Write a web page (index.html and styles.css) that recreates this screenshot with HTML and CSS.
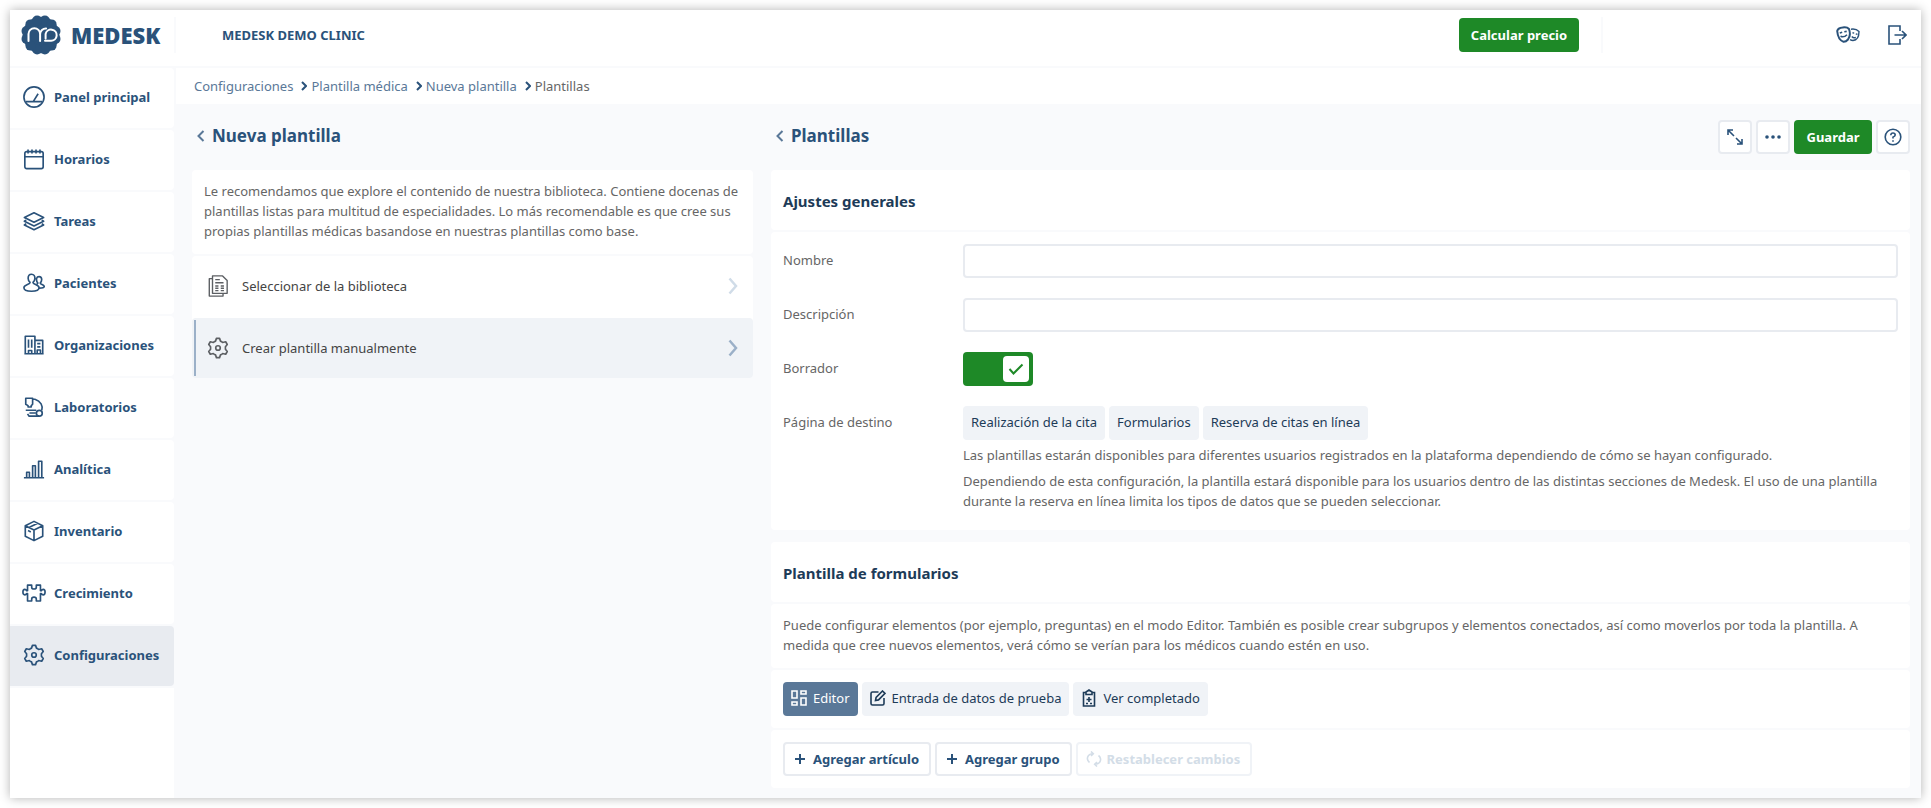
FILE: index.html
```html
<!DOCTYPE html>
<html lang="es">
<head>
<meta charset="utf-8">
<title>Medesk</title>
<link rel="stylesheet" href="styles.css">
</head>
<body>
<svg class="sprite" aria-hidden="true">
  <symbol id="gear" viewBox="0 0 24 24">
    <path d="M10.300 1.500h3.400l1 3q1.500.5 2.400 1.500l3.300-.8 1.700 3-2 2.400v2.800l2 2.400-1.700 3-3.300-.8q-.9 1-2.400 1.500l-1 3h-3.400l-1-3Q7.800 19 6.900 18l-3.300.8-1.700-3 2-2.400v-2.800l-2-2.400 1.700-3 3.300.8q.9-1 2.400-1.500z"/>
    <circle cx="12" cy="12" r="2.500"/>
  </symbol>
  <symbol id="plus" viewBox="0 0 10 10"><path d="M5 0v10M0 5h10"/></symbol>
  <symbol id="back" viewBox="0 0 8 12"><path d="M6.500 1 1.500 6l5 5"/></symbol>
  <symbol id="next" viewBox="0 0 10 18"><path d="M1.500 1.500 8 9l-6.500 7.500"/></symbol>
</svg>
<div class="app">
  <header class="header">
    <a class="logo" href="#">
      <svg class="logo-mark" viewBox="0 0 40 40" aria-hidden="true">
        <g fill="#2a527a">
          <circle cx="20" cy="20" r="18.300"/>
          <circle cx="23.900" cy="5.500" r="5"/><circle cx="30.600" cy="9.400" r="5"/><circle cx="34.500" cy="16.100" r="5"/>
          <circle cx="34.500" cy="23.900" r="5"/><circle cx="30.600" cy="30.600" r="5"/><circle cx="23.900" cy="34.500" r="5"/>
          <circle cx="16.100" cy="34.500" r="5"/><circle cx="9.400" cy="30.600" r="5"/><circle cx="5.500" cy="23.900" r="5"/>
          <circle cx="5.500" cy="16.100" r="5"/><circle cx="9.400" cy="9.400" r="5"/><circle cx="16.100" cy="5.500" r="5"/>
        </g>
        <path d="M7.500 26v-7a5.800 5.800 0 0 1 11.600 0v7M19.100 19a5.800 5.800 0 0 1 6-5.500M24.600 23.500v-4.500a5.600 5.600 0 1 1 5.400 6.800h-6" fill="none" stroke="#fff" stroke-width="2" stroke-linecap="round"/>
      </svg>
      <span class="logo-text">MEDESK</span>
    </a>
    <strong class="clinic">MEDESK DEMO CLINIC</strong>
    <button class="btn btn-green price" type="button">Calcular precio</button>
    <div class="header-tools">
      <button class="tool" type="button" aria-label="Cambiar de usuario">
        <svg width="24" height="18" viewBox="0 0 24 18" class="line">
          <path d="M1.200 5Q2 2 6.500 1.500q4.500-.8 6.500 1.500 2.200 6.500-1 10.500-2 2.300-4.500 2.200Q2 14 1.200 5z" stroke-width="2"/>
          <path d="M3.800 7l2.400-.7M8.300 5.800l2.400-.4M4.500 10.300q3.500 1.500 6.500-1.600" stroke-width="1.600"/>
          <path d="M15 3.200q5-.8 8 2.300 0 8.500-6 9-1.500 0-3-.8M16.500 6.800l1.700.3M19.800 7.800l1.700.6M15.800 10.500q1.700 2 4 .8" stroke-width="1.400"/>
        </svg>
      </button>
      <button class="tool" type="button" aria-label="Salir">
        <svg width="19" height="20" viewBox="0 0 19 20" class="line"><path d="M12 6V1H1v18h11v-5M6.500 10H18M14 6l4 4-4 4"/></svg>
      </button>
    </div>
  </header>

  <div class="body">
    <nav class="sidebar">
      <a class="nav-item" href="#"><svg class="icon" viewBox="0 0 24 24"><circle cx="12" cy="12" r="11"/><path d="M3 17h18M11.500 16.500 16.500 8.500"/></svg>Panel principal</a>
      <a class="nav-item" href="#"><svg class="icon" viewBox="0 0 24 24"><rect x="2" y="4" width="20" height="18.500" rx="2"/><path d="M2 9.500h20M5.500 1.500V6M9.800 1.500V6M14.200 1.500V6M18.500 1.500V6"/></svg>Horarios</a>
      <a class="nav-item" href="#"><svg class="icon" viewBox="0 0 24 24"><path d="m12 3 10.500 5.200L12 13.400 1.500 8.200zM3.500 11 1.500 12.300 12 17.500l10.500-5.200-2-1.300M3.500 15l-2 1.300L12 21.500l10.500-5.200-2-1.300"/></svg>Tareas</a>
      <a class="nav-item" href="#"><svg class="icon" viewBox="0 0 24 24"><path d="M9.300 2.500c-2.600 0-3.700 2-3.700 4.300 0 2 .9 3.500 2.100 4.600C7.700 13.800 1 13.700 1 17.200c0 5 16.500 5 16.500 0 0-3.500-6.600-3.400-6.600-5.800C12.100 10.300 13 8.800 13 6.800c0-2.300-1.100-4.300-3.700-4.300zM14.800 7c.5-1.500 1.500-2 2.700-2 2 0 2.900 1.500 2.900 3.300 0 1.500-.6 2.700-1.600 3.700 0 1.600 4.400 1.600 4.400 3.800 0 1.400-2.200 1.800-5.200 1.800M14.800 7c-.3 2.200.3 3.800 1.400 5l-1 1.300"/></svg>Pacientes</a>
      <a class="nav-item" href="#"><svg class="icon" viewBox="0 0 24 24"><path d="M2.500 21.500v-19h10.500v19M13 7h8.500v14.500M1.500 21.500h21M6 6v9M9.500 6v9M15.500 10.500h3.500M15.500 14h3.500M6 21v-3h3.500v3M15.500 21v-3.500H19V21"/></svg>Organizaciones</a>
      <a class="nav-item" href="#"><svg class="icon" viewBox="0 0 24 24"><path d="M3 2.500h7.500V9L9 10.500v1.500H5.500v-1.500L3 9zM10.500 3.500h2.500C19.500 5.500 22 11 20.500 15.500M3 15.500h11.500M5 19.500l1.500 2.500h11M7 18.500h7"/><circle cx="17.800" cy="18.800" r="3.200"/></svg>Laboratorios</a>
      <a class="nav-item" href="#"><svg class="icon" viewBox="0 0 24 24"><path d="M1 21.500h22M4 21v-5.500h3V21M10.500 21V8.500h3V21M17 21V3.500h3.500V21"/></svg>Analítica</a>
      <a class="nav-item" href="#"><svg class="icon" viewBox="0 0 24 24"><path d="m12 1.500 9.500 4.700v11.600L12 22.500l-9.500-4.700V6.200zM2.500 6.200 12 11l9.500-4.800M12 11v11.500M6.500 8.200 16 3.500M5.500 11.500l3 1.500"/></svg>Inventario</a>
      <a class="nav-item" href="#"><svg class="icon icon-wide" viewBox="0 0 26 24"><path d="M6 3.500h4.500v2.200q0 2 2.500 2t2.500-2V3.500H20v6h1q.5-1.500 2-1.500 2 0 2 3t-2 3q-1.500 0-2-1.500h-1v8.200h-4.500v-2.200q0-2-2.500-2t-2.500 2v2.200H6v-8.200H5Q4.500 14 3 14q-2 0-2-3t2-3q1.500 0 2 1.500h1z"/></svg>Crecimiento</a>
      <a class="nav-item active" href="#" aria-current="page"><svg class="icon"><use href="#gear"/></svg>Configuraciones</a>
      <div class="nav-rest"></div>
    </nav>

    <main class="main">
      <nav class="crumbs" aria-label="Ruta">
        <a href="#">Configuraciones</a><svg class="sep" viewBox="0 0 6 10"><path d="m1 1 4 4-4 4"/></svg>
        <a href="#">Plantilla médica</a><svg class="sep" viewBox="0 0 6 10"><path d="m1 1 4 4-4 4"/></svg>
        <a href="#">Nueva plantilla</a><svg class="sep" viewBox="0 0 6 10"><path d="m1 1 4 4-4 4"/></svg>
        <span>Plantillas</span>
      </nav>
      <div class="columns">
        <section class="left">
          <div class="title-row"><h1 class="title"><svg class="back"><use href="#back"/></svg>Nueva plantilla</h1></div>
          <p class="panel intro">Le recomendamos que explore el contenido de nuestra biblioteca. Contiene docenas de plantillas listas para multitud de especialidades. Lo más recomendable es que cree sus propias plantillas médicas basandose en nuestras plantillas como base.</p>
          <div class="panel">
            <a class="option" href="#">
              <svg class="icon" viewBox="0 0 24 24"><path d="M6 1h11l5 5V20H6zM5.500 4H2.500v19h15v-2.500M9 5h5M9 8.500h9M9 12h3.500M15 12h3.500M9 14.500h3.500M15 14.500h3.500M9 17h3.500M15 17h3.500" stroke-width="1.500"/></svg>
              <span>Seleccionar de la biblioteca</span><svg class="next"><use href="#next"/></svg>
            </a>
            <a class="option selected" href="#">
              <svg class="icon"><use href="#gear"/></svg>
              <span>Crear plantilla manualmente</span><svg class="next"><use href="#next"/></svg>
            </a>
          </div>
        </section>

        <section class="right">
          <div class="title-row">
            <h1 class="title"><svg class="back"><use href="#back"/></svg>Plantillas</h1>
            <div class="actions">
              <button class="btn btn-line square" type="button" aria-label="Expandir"><svg width="16" height="16" viewBox="0 0 16 16" class="line"><path d="M1 6V1h5M1 1l6 6M15 10v5h-5M15 15 9 9"/></svg></button>
              <button class="btn btn-line square" type="button" aria-label="Más"><svg width="16" height="4" viewBox="0 0 16 4"><g fill="#2a527a"><circle cx="2" cy="2" r="1.800"/><circle cx="8" cy="2" r="1.800"/><circle cx="14" cy="2" r="1.800"/></g></svg></button>
              <button class="btn btn-green save" type="button">Guardar</button>
              <button class="btn btn-line square" type="button" aria-label="Ayuda"><svg width="18" height="18" viewBox="0 0 18 18" class="line"><circle cx="9" cy="9" r="7.800"/><path d="M6.800 7.200Q6.900 5 9 5t2.200 1.900Q11.200 8 9 9.100v1.400M9 12.200v1.600"/></svg></button>
            </div>
          </div>

          <div class="card">
            <h2 class="panel heading">Ajustes generales</h2>
            <form class="panel fields">
              <label class="name" for="nombre">Nombre</label>
              <input class="text" id="nombre" type="text">
              <label class="name" for="desc">Descripción</label>
              <input class="text" id="desc" type="text">
              <label class="name" for="borrador">Borrador</label>
              <div class="switch">
                <input id="borrador" type="checkbox" checked>
                <span class="knob"><svg width="16" height="12" viewBox="0 0 16 12"><path d="m1.500 6 4 4.500L14.500 1.500"/></svg></span>
              </div>
              <span class="name">Página de destino</span>
              <div>
                <div class="row">
                  <button class="btn chip" type="button">Realización de la cita</button>
                  <button class="btn chip" type="button">Formularios</button>
                  <button class="btn chip" type="button">Reserva de citas en línea</button>
                </div>
                <div class="hints">
                  <p>Las plantillas estarán disponibles para diferentes usuarios registrados en la plataforma dependiendo de cómo se hayan configurado.</p>
                  <p>Dependiendo de esta configuración, la plantilla estará disponible para los usuarios dentro de las distintas secciones de Medesk. El uso de una plantilla durante la reserva en línea limita los tipos de datos que se pueden seleccionar.</p>
                </div>
              </div>
            </form>
          </div>

          <div class="card">
            <h2 class="panel heading">Plantilla de formularios</h2>
            <p class="panel note">Puede configurar elementos (por ejemplo, preguntas) en el modo Editor. También es posible crear subgrupos y elementos conectados, así como moverlos por toda la plantilla. A medida que cree nuevos elementos, verá cómo se verían para los médicos cuando estén en uso.</p>
            <div class="panel row bar">
              <button class="btn tab current" type="button"><svg width="16" height="16" viewBox="0 0 16 16"><path d="M1 1h5v7H1zM10 1h5v3h-5zM1 12h5v3H1zM10 8h5v7h-5z"/></svg>Editor</button>
              <button class="btn tab" type="button"><svg width="16" height="16" viewBox="0 0 16 16"><path d="M8.500 2H2.500Q1 2 1 3.500v10Q1 15 2.500 15h10q1.500 0 1.500-1.500V8M5.500 10.500l.6-3L12.500 1 15 3.400 8.500 9.900z"/></svg>Entrada de datos de prueba</button>
              <button class="btn tab" type="button"><svg width="16" height="18" viewBox="0 0 16 18"><path d="M5 3.500H2.500V17h11V3.500H11M5 5.500V3l3-2 3 2v2.500zM8 8v5M5.500 10.500h5M5 14.500h2M9 14.500h2"/></svg>Ver completado</button>
            </div>
            <div class="panel row bar">
              <button class="btn btn-line add" type="button"><svg width="10" height="10"><use href="#plus"/></svg>Agregar artículo</button>
              <button class="btn btn-line add" type="button"><svg width="10" height="10"><use href="#plus"/></svg>Agregar grupo</button>
              <button class="btn btn-line reset" type="button" disabled><svg width="16" height="16" viewBox="0 0 16 16"><path d="M3.500 11.500A4.800 4.800 0 0 1 2.500 4.500Q4 2.800 7 2.800M5 .5l2.300 2.300L5 5M12.500 4.500A4.800 4.800 0 0 1 13.500 11.500q-1.500 1.700-4.500 1.700M11 11l-2.300 2.200L11 15.500"/></svg>Restablecer cambios</button>
            </div>
          </div>
        </section>
      </div>
    </main>
  </div>
</div>
</body>
</html>
```

FILE: styles.css
```css
* { box-sizing: border-box; }
body {
  margin: 0;
  padding: 10px;
  min-height: 100vh;
  display: flex;
  background: #fff;
  color: #666;
  font: 13px/20px "Noto Sans", "Open Sans", sans-serif;
}
h1, h2, p { margin: 0; }
a { color: inherit; text-decoration: none; }
button, input { font: inherit; }
button { cursor: pointer; }
svg { flex: none; fill: none; }
.sprite { display: none; }
.line { stroke: #2a527a; stroke-width: 1.600; }

.app {
  flex: 1;
  display: flex;
  flex-direction: column;
  background: #f9fafc;
  box-shadow: 0 0 10px rgba(0, 0, 0, .3);
}

.header {
  display: flex;
  align-items: center;
  height: 56px;
  padding: 0 12px 6px 0;
  background: #fff;
  color: #2a527a;
}
.logo {
  display: flex;
  align-items: center;
  gap: 10px;
  width: 166px;
  height: 36px;
  padding-left: 11px;
  border-right: 2px solid #f9fafc;
}
.logo-mark { width: 40px; height: 40px; }
.logo-text { font: 800 22px/24px "Open Sans", sans-serif; }
.clinic { margin-left: 46px; }

.btn {
  display: flex;
  align-items: center;
  justify-content: center;
  height: 34px;
  padding: 0 8px 2px;
  border: 0;
  border-radius: 4px;
  background: #f0f3f7;
  color: #1d3b58;
  white-space: nowrap;
}
.btn-green { padding-bottom: 0; background: #1e8927; color: #fff; font-weight: 700; }
.btn-line { border: 2px solid #e8ebf0; background: #fff; color: #2a527a; font-weight: 700; }
.square { width: 34px; padding: 0; }
.price { width: 120px; margin-left: auto; }
.header-tools {
  display: flex;
  align-items: center;
  justify-content: flex-end;
  gap: 28px;
  width: 308px;
  height: 36px;
  margin-left: 22px;
  border-left: 2px solid #f9fafc;
}
.tool { display: flex; padding: 0; border: 0; background: none; }
.tool:last-child { margin-right: 2px; }

.body { flex: 1; display: flex; gap: 2px; padding-top: 2px; }
.sidebar { display: flex; flex-direction: column; gap: 2px; width: 164px; color: #2a527a; }
.nav-item {
  display: flex;
  align-items: center;
  gap: 8px;
  height: 60px;
  padding: 0 0 2px 12px;
  border-radius: 0 4px 4px 0;
  background: #fff;
  font-weight: 700;
}
.active { background: #e8ebf0; }
.nav-rest { flex: 1; background: #fff; }
.icon { width: 24px; height: 24px; padding: 1px; stroke: currentColor; stroke-width: 1.800; stroke-linejoin: round; }
.icon-wide { padding: 0; }

.main { flex: 1; min-width: 0; }
.crumbs { display: flex; align-items: center; height: 36px; padding-left: 18px; background: #fff; color: #5a7898; }
.crumbs span { color: #666; }
.sep { width: 6px; height: 10px; margin: 0 4px 0 8px; stroke: #2a527a; stroke-width: 2; }

.columns { display: grid; grid-template-columns: 561fr 1139fr; gap: 18px; padding: 0 11px 10px 16px; }
.title-row { display: flex; align-items: center; justify-content: space-between; height: 66px; }
.title { display: flex; align-items: center; gap: 7px; padding: 0 0 2px 5px; color: #2a527a; font-size: 17px; line-height: 24px; }
.back { width: 8px; height: 12px; stroke: #5a7898; stroke-width: 2; }
.actions, .row { display: flex; gap: 4px; }
.save { width: 78px; }

.panel { border-radius: 4px; background: #fff; }
.intro { margin-bottom: 2px; padding: 11px 12px 13px; }
.option { display: flex; align-items: center; gap: 12px; height: 62px; padding: 0 15px 2px 14px; color: #444; }
.option span { flex: 1; }
.option .icon { stroke: #5c5f63; }
.next { width: 10px; height: 18px; stroke: #d0dce8; stroke-width: 2.500; }
.selected { height: 60px; padding-bottom: 0; border-radius: 4px; background: linear-gradient(#9bb0c8, #9bb0c8) 2px center / 2px 56px no-repeat #f0f3f7; }
.selected .next { stroke: #9bb0c8; }

.card { display: flex; flex-direction: column; gap: 2px; margin-bottom: 12px; }
.card:last-child { margin-bottom: 0; }
.heading { padding: 21px 12px 19px; color: #1d3b58; font-size: 15px; line-height: 20px; }
.fields { display: grid; grid-template-columns: 160px 1fr; gap: 20px; padding: 12px 12px 18px; }
.name { line-height: 32px; }
.fields .name { height: 34px; }
.text { width: 100%; height: 34px; padding: 0 8px; border: 2px solid #e8ebf0; border-radius: 4px; background: #fff; }
.switch { position: relative; width: 70px; height: 34px; }
.switch input { width: 70px; height: 34px; margin: 0; border-radius: 4px; background: #1e8927; appearance: none; }
.knob {
  position: absolute;
  top: 4px;
  right: 4px;
  display: flex;
  align-items: center;
  justify-content: center;
  width: 26px;
  height: 26px;
  border-radius: 4px;
  background: #fff;
  pointer-events: none;
}
.knob svg { stroke: #1e8927; stroke-width: 2; }
.hints { display: flex; flex-direction: column; gap: 6px; padding: 5px 0 1px; }
.note { padding: 11px 12px 13px; }
.bar { padding: 12px; }
.tab { gap: 6px; }
.tab svg { stroke: #1d3b58; stroke-width: 1.600; }
.current { background: #5a7898; color: #fff; }
.tab.current svg { stroke: #fff; }
.add { gap: 8px; padding: 0 10px; }
.add svg { stroke: #2a527a; stroke-width: 2; }
.reset { gap: 5px; padding: 0 10px 0 8px; border-color: #f0f3f7; color: #d3dde7; }
.reset svg { stroke: #d3dde7; stroke-width: 1.600; }
```
